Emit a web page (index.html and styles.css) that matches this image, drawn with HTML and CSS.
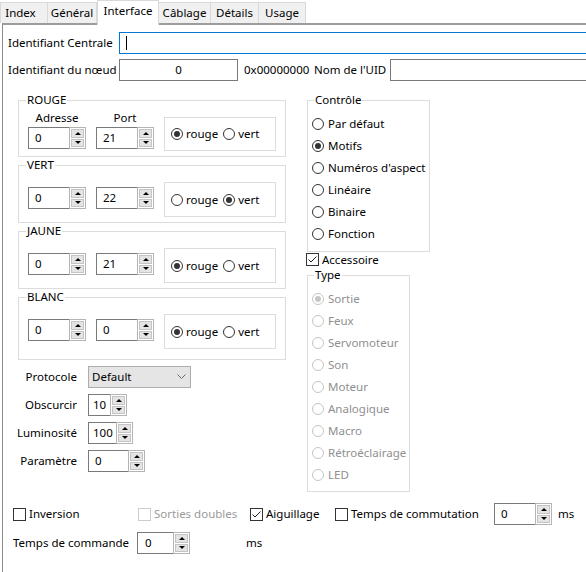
FILE: index.html
```html
<!DOCTYPE html>
<html lang="fr">
<head>
<meta charset="utf-8">
<title>Interface</title>
<link rel="stylesheet" href="styles.css">
</head>
<body>
<div class="tabs">
  <div class="tab tab-index">Index</div>
  <div class="tab tab-gen">Général</div>
  <div class="tab tab-int active">Interface</div>
  <div class="tab tab-cab">Câblage</div>
  <div class="tab tab-det">Détails</div>
  <div class="tab tab-use">Usage</div>
</div>
<div class="panel">
  <div class="row">
    <span class="lbl-id">Identifiant Centrale</span>
    <div class="textbox central"><span class="caret"></span></div>
  </div>
  <div class="row row-node">
    <span class="lbl-id">Identifiant du nœud</span>
    <div class="textbox node">0</div>
    <span class="hex">0x00000000</span>
    <span class="lbl-uid">Nom de l'UID</span>
    <div class="textbox uid"></div>
  </div>

  <div class="main">
    <div class="left">
      <fieldset class="grp">
        <legend>ROUGE</legend>
        <div class="grp-body head">
          <div class="col">
            <span class="col-head">Adresse</span>
            <div class="spin s58"><span class="val">0</span><span class="btns"><span class="btn up"></span><span class="btn down"></span></span></div>
          </div>
          <div class="col">
            <span class="col-head">Port</span>
            <div class="spin s58"><span class="val">21</span><span class="btns"><span class="btn up"></span><span class="btn down"></span></span></div>
          </div>
          <div class="radiobox short">
            <span class="radio on"><span class="dot"></span>rouge</span>
            <span class="radio second"><span class="dot"></span>vert</span>
          </div>
        </div>
      </fieldset>

      <fieldset class="grp">
        <legend>VERT</legend>
        <div class="grp-body plain">
          <div class="spin s58 grp-spin"><span class="val">0</span><span class="btns"><span class="btn up"></span><span class="btn down"></span></span></div>
          <div class="spin s58 grp-spin"><span class="val">22</span><span class="btns"><span class="btn up"></span><span class="btn down"></span></span></div>
          <div class="radiobox">
            <span class="radio"><span class="dot"></span>rouge</span>
            <span class="radio second on"><span class="dot"></span>vert</span>
          </div>
        </div>
      </fieldset>

      <fieldset class="grp">
        <legend>JAUNE</legend>
        <div class="grp-body plain">
          <div class="spin s58 grp-spin"><span class="val">0</span><span class="btns"><span class="btn up"></span><span class="btn down"></span></span></div>
          <div class="spin s58 grp-spin"><span class="val">21</span><span class="btns"><span class="btn up"></span><span class="btn down"></span></span></div>
          <div class="radiobox">
            <span class="radio on"><span class="dot"></span>rouge</span>
            <span class="radio second"><span class="dot"></span>vert</span>
          </div>
        </div>
      </fieldset>

      <fieldset class="grp">
        <legend>BLANC</legend>
        <div class="grp-body plain last">
          <div class="spin s58 grp-spin"><span class="val">0</span><span class="btns"><span class="btn up"></span><span class="btn down"></span></span></div>
          <div class="spin s58 grp-spin"><span class="val">0</span><span class="btns"><span class="btn up"></span><span class="btn down"></span></span></div>
          <div class="radiobox">
            <span class="radio on"><span class="dot"></span>rouge</span>
            <span class="radio second"><span class="dot"></span>vert</span>
          </div>
        </div>
      </fieldset>

      <div class="form">
        <span class="flbl">Protocole</span>
        <div class="combo"><span>Default</span><svg class="chev" width="9" height="6" viewBox="0 0 9 6"><polyline points="0.5,0.5 4.5,4.5 8.5,0.5" fill="none" stroke="#6a6a6a" stroke-width="1"/></svg></div>
        <span class="flbl">Obscurcir</span>
        <div class="spin s39"><span class="val tight">10</span><span class="btns"><span class="btn up"></span><span class="btn down"></span></span></div>
        <span class="flbl">Luminosité</span>
        <div class="spin s45"><span class="val tight">100</span><span class="btns"><span class="btn up"></span><span class="btn down"></span></span></div>
        <span class="flbl">Paramètre</span>
        <div class="spin s57"><span class="val">0</span><span class="btns"><span class="btn up"></span><span class="btn down"></span></span></div>
      </div>
    </div>

    <div class="right">
      <fieldset class="grp ctrl">
        <legend>Contrôle</legend>
        <div class="list">
          <span class="radio item"><span class="dot"></span>Par défaut</span>
          <span class="radio item on"><span class="dot"></span>Motifs</span>
          <span class="radio item"><span class="dot"></span>Numéros d'aspect</span>
          <span class="radio item"><span class="dot"></span>Linéaire</span>
          <span class="radio item"><span class="dot"></span>Binaire</span>
          <span class="radio item"><span class="dot"></span>Fonction</span>
        </div>
      </fieldset>
      <div class="acc">
        <span class="check on"><span class="box"><svg width="11" height="11" viewBox="0 0 11 11"><polyline points="1.5,5.5 4,8 9.5,2.5" fill="none" stroke="#222" stroke-width="1"/></svg></span>Accessoire</span>
      </div>
      <fieldset class="grp type">
        <legend>Type</legend>
        <div class="list">
          <span class="radio item dis on"><span class="dot"></span>Sortie</span>
          <span class="radio item dis"><span class="dot"></span>Feux</span>
          <span class="radio item dis"><span class="dot"></span>Servomoteur</span>
          <span class="radio item dis"><span class="dot"></span>Son</span>
          <span class="radio item dis"><span class="dot"></span>Moteur</span>
          <span class="radio item dis"><span class="dot"></span>Analogique</span>
          <span class="radio item dis"><span class="dot"></span>Macro</span>
          <span class="radio item dis"><span class="dot"></span>Rétroéclairage</span>
          <span class="radio item dis"><span class="dot"></span>LED</span>
        </div>
      </fieldset>
    </div>
  </div>

  <div class="bottom1">
    <span class="check w-inv"><span class="box"></span>Inversion</span>
    <span class="check dis w-sor"><span class="box"></span>Sorties doubles</span>
    <span class="check on w-aig"><span class="box"><svg width="11" height="11" viewBox="0 0 11 11"><polyline points="1.5,5.5 4,8 9.5,2.5" fill="none" stroke="#222" stroke-width="1"/></svg></span>Aiguillage</span>
    <span class="check w-com"><span class="box"></span>Temps de commutation</span>
    <div class="spin s58"><span class="val">0</span><span class="btns"><span class="btn up"></span><span class="btn down"></span></span></div>
    <span class="ms">ms</span>
  </div>
  <div class="bottom2">
    <span class="lbl-cmd">Temps de commande</span>
    <div class="spin s52"><span class="val wide">0</span><span class="btns"><span class="btn up"></span><span class="btn down"></span></span></div>
    <span class="ms ms-cmd">ms</span>
  </div>
</div>
</body>
</html>
```

FILE: styles.css
```css
* { box-sizing: border-box; }
html, body { margin: 0; padding: 0; background: #fff; }
body {
  width: 586px;
  height: 572px;
  overflow: hidden;
  font-family: "Noto Sans", "Open Sans", sans-serif;
  font-size: 11.5px;
  line-height: 16px;
  color: #000;
}

/* tabs */
.tabs { display: flex; align-items: flex-start; height: 23px; }
.tab {
  height: 21px;
  margin-top: 2px;
  background: #f0f0f0;
  border-top: 1px solid #d9d9d9;
  border-right: 1px solid #d9d9d9;
  display: flex;
  align-items: center;
  justify-content: center;
  flex-shrink: 0;
  white-space: nowrap;
}
.tab-index { width: 48px; border-left: 1px solid #d9d9d9; padding-right: 7px; }
.tab-gen { width: 49px; }
.tab-int { width: 62px; }
.tab-cab { width: 52px; }
.tab-det { width: 48px; }
.tab-use { width: 47px; }
.tab.active {
  height: 25px;
  margin-top: 0;
  margin-bottom: -2px;
  background: #fff;
  border-left: 1px solid #d9d9d9;
  align-items: flex-start;
  padding-top: 2px;
  position: relative;
  z-index: 1;
}

/* panel */
.panel {
  margin-left: 2px;
  height: 549px;
  border-top: 2px solid #9c9c9c;
  border-left: 1px solid #8c8c8c;
  padding: 7px 0 0 5px;
}
.row { display: flex; align-items: center; height: 22px; }
.row-node { margin-top: 5px; }
.lbl-id { width: 111px; flex-shrink: 0; white-space: nowrap; }
.textbox {
  height: 22px;
  border: 1px solid #7a7a7a;
  background: #fff;
  flex-shrink: 0;
  display: flex;
  align-items: center;
}
.textbox.central { width: 480px; border-color: #0078d7; padding-left: 6px; }
.caret { width: 1px; height: 14px; background: #000; }
.textbox.node { width: 119px; justify-content: center; }
.hex { width: 70px; margin-left: 6px; flex-shrink: 0; white-space: nowrap; }
.lbl-uid { width: 76px; flex-shrink: 0; white-space: nowrap; }
.textbox.uid { width: 220px; }

/* main area */
.main { display: flex; margin: 11px 0 0 10px; gap: 21px; }
.left { width: 268px; flex-shrink: 0; }
.right { width: 123px; flex-shrink: 0; }

.grp {
  margin: 0;
  padding: 0;
  min-width: 0;
  border: 1px solid #dcdcdc;
}
.grp legend {
  margin-left: 7px;
  padding: 0 1px;
  line-height: 16px;
  height: 16px;
  white-space: nowrap;
}
.grp-body { display: flex; padding-left: 9px; }
.grp-body.head { align-items: flex-end; padding-top: 2px; padding-bottom: 5px; }
.grp-body.plain { align-items: flex-start; padding-top: 9px; padding-bottom: 5px; }
.grp-body.plain.last { padding-bottom: 10px; }
.col { display: flex; flex-direction: column; align-items: center; width: 58px; margin-right: 10px; }
.col-head { line-height: 16px; }
.col .spin { margin-top: 1px; margin-bottom: 2px; }
.grp-spin { margin-top: 5px; margin-right: 10px; }

.radiobox {
  width: 112px;
  height: 35px;
  border: 1px solid #dcdcdc;
  display: flex;
  align-items: center;
  padding-left: 6px;
  flex-shrink: 0;
}
.radiobox.short { height: 34px; }

/* spin box */
.spin { display: flex; height: 22px; flex-shrink: 0; }
.s58 { width: 58px; }
.s57 { width: 57px; }
.s52 { width: 53px; }
.s45 { width: 45px; }
.s39 { width: 39px; }
.spin .val {
  flex: 1;
  min-width: 0;
  border: 1px solid #7a7a7a;
  border-right: none;
  background: #fff;
  display: flex;
  align-items: center;
  padding-left: 6px;
}
.spin .val.tight { padding-left: 4px; }
.spin .val.wide { padding-left: 7px; }
.btns {
  width: 17px;
  flex-shrink: 0;
  display: flex;
  flex-direction: column;
  border: 1px solid #b4b4b4;
  background: #fff;
  padding: 1px;
}
.btn {
  flex: 1;
  background: #e4e4e4;
  border: 1px solid #c4c4c4;
  display: flex;
  align-items: center;
  justify-content: center;
}
.btn.up { margin-bottom: 1px; }
.btn.up::before {
  content: "";
  border-left: 3px solid transparent;
  border-right: 3px solid transparent;
  border-bottom: 3px solid #000;
}
.btn.down::before {
  content: "";
  border-left: 3px solid transparent;
  border-right: 3px solid transparent;
  border-top: 3px solid #000;
}

/* radio */
.radio { display: inline-flex; align-items: center; white-space: nowrap; }
.radio .dot {
  width: 12px;
  height: 12px;
  border: 1px solid #333;
  border-radius: 50%;
  margin-right: 3px;
  display: inline-flex;
  align-items: center;
  justify-content: center;
  background: #fff;
  flex-shrink: 0;
}
.radio.on .dot::after {
  content: "";
  width: 6px;
  height: 6px;
  border-radius: 50%;
  background: #333;
}
.radio.second { margin-left: 5px; }
.radio.dis { color: #8f8f8f; }
.radio.dis .dot { border-color: #c6c6c6; }
.radio.dis.on .dot::after { background: #c6c6c6; }

.list { display: flex; flex-direction: column; padding: 5px 0 6px 4px; }
.list .radio.item { height: 22px; }
.list .radio .dot { margin-right: 4px; }
.ctrl legend, .type legend { margin-left: 6px; }
.type { width: 103px; }
.type .list { padding-bottom: 5px; }

/* checkbox */
.check { display: inline-flex; align-items: center; white-space: nowrap; flex-shrink: 0; }
.check .box {
  width: 13px;
  height: 13px;
  border: 1px solid #333;
  background: #fff;
  margin-right: 3px;
  display: inline-flex;
  align-items: center;
  justify-content: center;
  flex-shrink: 0;
}
.check .box svg { display: block; }
.check.dis { color: #9a9a9a; }
.check.dis .box { border-color: #cccccc; }
.acc { height: 15px; display: flex; align-items: center; margin-left: -1px; }

/* form rows */
.form {
  display: grid;
  grid-template-columns: 67px auto;
  column-gap: 11px;
  row-gap: 6px;
  margin: 6px 0 0 -8px;
  grid-auto-rows: 22px;
}
.flbl { justify-self: end; align-self: center; white-space: nowrap; }
.combo {
  width: 103px;
  height: 22px;
  background: #e5e5e5;
  border: 1px solid #adadad;
  display: flex;
  align-items: center;
  justify-content: space-between;
  padding: 0 4px 0 3px;
}
.chev { display: block; }
.form .spin { justify-self: start; }

/* bottom */
.bottom1 { display: flex; align-items: center; height: 22px; margin: 11px 0 0 5px; }
.w-inv { width: 125px; }
.w-sor { width: 112px; }
.w-aig { width: 85px; }
.w-com { width: 159px; }
.ms { margin-left: 6px; }
.bottom2 { display: flex; align-items: center; height: 22px; margin: 7px 0 0 5px; }
.lbl-cmd { width: 124px; flex-shrink: 0; white-space: nowrap; }
.ms-cmd { margin-left: 56px; }
```
